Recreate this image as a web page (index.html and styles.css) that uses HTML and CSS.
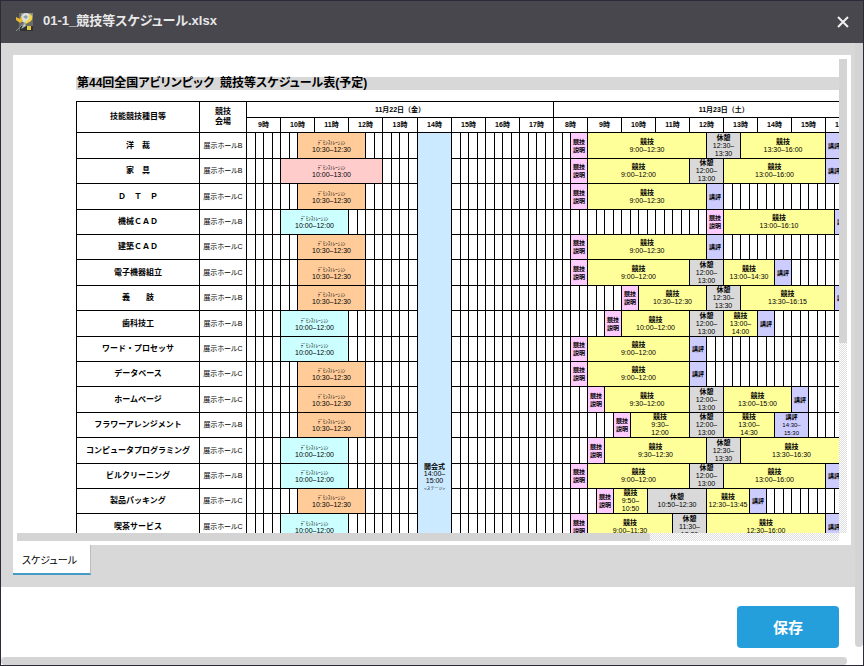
FILE: index.html
```
<!DOCTYPE html>
<html lang="ja">
<head>
<meta charset="utf-8">
<title>01-1_競技等スケジュール.xlsx</title>
<link rel="stylesheet" href="styles.css">
</head>
<body>
<div class="window">
  <header class="titlebar">
    <svg class="file-icon" viewBox="0 0 20 20" aria-hidden="true">
      <path d="M4 1h14v18H4z" fill="#6c6d62"/>
      <path d="M6 1h12v4H6z" fill="#8c8e86"/>
      <path d="M5 14h13v5H5z" fill="#2f3233"/>
      <circle cx="11" cy="6" r="5" fill="#d9e0df"/>
      <path d="M8 5l3-2 2 2-2 2z" fill="#8ba0a6"/>
      <path d="M1 5l4 2 1-3 2 5-3 2-4-3z" fill="#e6b82f"/>
      <path d="M14 2c5 1 4 7 0 8l-3 2-1-2 4-3z" fill="#f4d548"/>
      <path d="M9 11L1 19" stroke="#7f9294" stroke-width="1"/>
      <path d="M10 10l-4 7 5-3z" fill="#b9c2bc"/>
      <path d="M12 14h4v4h-4z" fill="#e5c93e"/>
    </svg>
    <h1 class="file-name">01-1_競技等スケジュール.xlsx</h1>
    <button class="close" type="button" aria-label="閉じる">
      <svg viewBox="0 0 12 12"><path d="M1 1l10 10M11 1l-10 10" stroke="#f0f0f0" stroke-width="2" fill="none"/></svg>
    </button>
  </header>
  <div class="content">
    <div class="page">
      <main class="viewer">
        <div class="sheet-frame">
          <div class="sheet-row">
            <div class="sheet">
              <h2 class="sheet-title">第44回全国アビリンピック&ensp;競技等スケジュール表(予定)</h2>
              <table class="schedule">
                <colgroup id="cols"><col class="col-name"><col class="col-place"></colgroup>
                <thead>
                  <tr class="days">
                    <th rowspan="2" class="event">技能競技種目等</th>
                    <th rowspan="2" class="place-head">競技<br>会場</th>
                    <th colspan="36">11月22日（金）</th>
                    <th colspan="40">11月23日（土）</th>
                  </tr>
                  <tr class="hours" id="hours"></tr>
                </thead>
                <tbody id="rows"></tbody>
              </table>
            </div>
            <div class="vbar"><div class="vthumb"></div></div>
          </div>
          <div class="hbar"><div class="hthumb"></div></div>
        </div>
        <nav class="tabs"><button class="tab" type="button">スケジュール</button></nav>
      </main>
      <footer class="actions"><button class="save" type="button">保存</button></footer>
    </div>
    <div class="page-vbar"></div>
  </div>
  <div class="page-hbar"></div>
</div>
<script src="schedule.js"></script>
</body>
</html>
```
FILE: schedule.js
```
// Slots are quarter hours: 0 is Friday 9:00, 36 is Saturday 8:00.
const SLOTS = 76;
const SAT = 36;
const demo = {
  a: [6, 14, "peach", "10:30–12:30"],
  b: [4, 12, "cyan", "10:00–12:00"],
  c: [4, 16, "rose", "10:00–13:00"]
};
const events = [
  ["洋　裁", "B", "a", [[2,4,"p"],[4,18,"k","9:00–12:30"],[18,22,"r","12:30–|13:30"],[22,32,"k","13:30–16:00"],[32,34,"e"]]],
  ["家　具", "B", "c", [[2,4,"p"],[4,16,"k","9:00–12:00"],[16,20,"r","12:00–|13:00"],[20,32,"k","13:00–16:00"],[32,34,"e"]]],
  ["Ｄ　Ｔ　Ｐ", "C", "a", [[2,4,"p"],[4,18,"k","9:00–12:30"],[18,20,"e"]]],
  ["機械ＣＡＤ", "B", "b", [[18,20,"p"],[20,33,"k","13:00–16:10"],[33,35,"e"]]],
  ["建築ＣＡＤ", "C", "a", [[2,4,"p"],[4,18,"k","9:00–12:30"],[18,20,"e"]]],
  ["電子機器組立", "C", "a", [[2,4,"p"],[4,16,"k","9:00–12:00"],[16,20,"r","12:00–|13:00"],[20,26,"k","13:00–14:30"],[26,28,"e"]]],
  ["義　　肢", "B", "a", [[8,10,"p"],[10,18,"k","10:30–12:30"],[18,22,"r","12:30–|13:30"],[22,33,"k","13:30–16:15"],[33,35,"e"]]],
  ["歯科技工", "B", "b", [[6,8,"p"],[8,16,"k","10:00–12:00"],[16,20,"r","12:00–|13:00"],[20,24,"k","13:00–|14:00"],[24,26,"e"]]],
  ["ワード・プロセッサ", "C", "b", [[2,4,"p"],[4,16,"k","9:00–12:00"],[16,18,"e"]]],
  ["データベース", "C", "a", [[2,4,"p"],[4,16,"k","9:00–12:00"],[16,18,"e"]]],
  ["ホームページ", "C", "a", [[4,6,"p"],[6,16,"k","9:30–12:00"],[16,20,"r","12:00–|13:00"],[20,28,"k","13:00–15:00"],[28,30,"e"]]],
  ["フラワーアレンジメント", "B", "a", [[7,9,"p"],[9,16,"k","9:30–|12:00"],[16,20,"r","12:00–|13:00"],[20,26,"k","13:00–|14:30"],[26,30,"e","14:30–|15:30"]]],
  ["コンピュータプログラミング", "C", "b", [[4,6,"p"],[6,18,"k","9:30–12:30"],[18,22,"r","12:30–|13:30"],[22,34,"k","13:30–16:30"],[34,36,"e"]]],
  ["ビルクリーニング", "B", "b", [[2,4,"p"],[4,16,"k","9:00–12:00"],[16,20,"r","12:00–|13:00"],[20,32,"k","13:00–16:00"],[32,34,"e"]]],
  ["製品パッキング", "C", "a", [[5,7,"p"],[7,11,"k","9:50–|10:50"],[11,18,"r","10:50–12:30"],[18,23,"k","12:30–13:45"],[23,25,"e"]]],
  ["喫茶サービス", "C", "b", [[2,4,"p"],[4,14,"k","9:00–11:30"],[14,18,"r","11:30–|12:30"],[18,32,"k","12:30–16:00"],[32,34,"e"]]]
];
const kinds = {
  p: ["prep", "競技<br>説明"],
  k: ["contest", "競技"],
  r: ["rest", "休憩"],
  e: ["end", "講評"]
};

const cols = document.getElementById("cols");
for (let i = 0; i < SLOTS; i++) {
  const col = document.createElement("col");
  col.className = i % 2 === 0 || i === 19 ? "wide" : "narrow";
  cols.append(col);
}

const hours = [9,10,11,12,13,14,15,16,17,8,9,10,11,12,13,14,15,16,17];
document.getElementById("hours").innerHTML =
  hours.map(h => `<th colspan="4">${h}時</th>`).join("");

const block = (from, to, cls, html) =>
  `<td colspan="${to - from}" class="${cls}">${html}</td>`;

document.getElementById("rows").innerHTML = events.map(([name, hall, d, sat], row) => {
  const [from, to, tone, time] = demo[d];
  const items = [[from, to, tone, `<small>ﾃﾞﾓﾝｽﾄﾚｰｼｮﾝ</small><br>${time}`], [20, 24, "opening", ""]];
  for (const [s, e, kind, t] of sat) {
    const [cls, label] = kinds[kind];
    const lines = t ? "<br>" + t.replace("|", "<br>") : "";
    items.push([SAT + s, SAT + e, cls, `<b>${label}</b>${lines}`]);
  }
  let html = "";
  let at = 0;
  for (const [s, e, cls, text] of items) {
    html += "<td></td>".repeat(s - at);
    if (cls !== "opening") html += block(s, e, cls, text);
    else if (row === 0) html += `<td colspan="4" rowspan="${events.length}" class="opening"><b>開会式</b><br>14:00–<br>15:00<br><small>&lt;ステージ&gt;</small></td>`;
    at = e;
  }
  html += "<td></td>".repeat(SLOTS - at);
  return `<tr><th class="event">${name}</th><td class="place">展示ホール${hall}</td>${html}</tr>`;
}).join("");
```
FILE: styles.css
```
* { box-sizing: border-box; }
body {
  margin: 0;
  font-family: "Liberation Sans", "Noto Sans CJK JP", sans-serif;
  color: #000;
}
button { font: inherit; border: 0; padding: 0; }
.window {
  display: flex;
  flex-direction: column;
  height: 100vh;
  border: 1px solid #2c2a38;
  background: #fff;
  overflow: hidden;
}
.titlebar {
  display: flex;
  align-items: center;
  flex: 0 0 42px;
  padding: 0 14px;
  background: #47474d;
  color: #e8e8e8;
}
.file-icon { width: 20px; height: 20px; }
.file-name {
  flex: 1;
  margin: 0 0 0 8px;
  font-size: 13px;
  line-height: 16px;
  padding-bottom: 3px;
  font-feature-settings: "palt";
}
.close {
  width: 12px;
  height: 12px;
  background: none;
}
.close svg { display: block; }
.content { display: flex; flex: 1; min-height: 0; }
.page { display: flex; flex-direction: column; flex: 1; min-width: 0; }
.viewer {
  display: flex;
  flex-direction: column;
  flex: 1;
  min-height: 0;
  padding: 12px 4px 12px 12px;
  background: #d8d8d8;
}
.sheet-frame {
  display: flex;
  flex-direction: column;
  flex: 1;
  min-height: 0;
  padding: 4px;
  background: #fff;
}
.sheet-row { display: flex; flex: 1; min-height: 0; }
.sheet { flex: 1; min-width: 0; padding: 18px 0 0 59px; overflow: hidden; }
.vbar, .hbar {
  background: repeating-conic-gradient(#ddd 0 25%, #fff 0 50%) 0 0 / 2px 2px;
}
.vbar { flex: 0 0 8px; }
.vthumb { height: 60%; background: #d4d4d4; }
.hbar { flex: 0 0 8px; margin-right: 8px; }
.hthumb { width: 77%; height: 100%; background: #d4d4d4; border-radius: 0 2px 2px 0; }
.sheet-title {
  margin: 0 0 11px;
  padding-left: 1px;
  font-size: 12px;
  line-height: 13px;
  white-space: nowrap;
  background: #d8d8d8;
  font-feature-settings: "palt";
}
.schedule {
  width: 817px;
  table-layout: fixed;
  border-collapse: collapse;
  font-size: 7px;
  line-height: 8px;
  text-align: center;
  white-space: nowrap;
}
.col-name { width: 123px; }
.col-place { width: 47px; }
.wide { width: 9px; }
.narrow { width: 8px; }
.schedule th, .schedule td { padding: 0; border: 1px solid #000; }
.schedule small { font-size: 5px; }
.days { height: 16px; }
.hours { height: 15px; }
.schedule .event { font-size: 8px; }
.schedule .place-head { font-size: 8px; line-height: 10px; }
.schedule tbody tr { height: 25px; }
.schedule tbody tr:nth-child(5n+1), .schedule tbody tr:nth-child(5n+3) { height: 26px; }
.schedule .place { font-feature-settings: "palt"; }
.schedule .prep, .schedule .end { font-size: 6px; }
.peach { background: #ffcc99; }
.cyan { background: #ccffff; }
.rose { background: #ffcccc; }
.prep { background: #ffccff; }
.contest { background: #ffff99; }
.rest { background: #d9d9d9; }
.end { background: #ccccff; }
.schedule .opening {
  padding-top: 330px;
  line-height: 7px;
  vertical-align: top;
  background: #cceaff;
}
.schedule .opening small { font-size: 4px; }
.tabs { display: flex; }
.tab {
  width: 78px;
  height: 30px;
  padding-right: 4px;
  background: #fff;
  border-right: 1px solid #bcbcbc;
  border-bottom: 2px solid #459bc5;
  font-size: 10px;
  font-feature-settings: "palt";
}
.actions {
  display: flex;
  justify-content: flex-end;
  padding: 19px 16px 9px;
  background: #fff;
}
.save {
  width: 102px;
  height: 42px;
  border-radius: 4px;
  background: #259fdc;
  color: #fff;
  font-size: 15px;
  padding-bottom: 2px;
  font-weight: bold;
}
.page-vbar {
  flex: 0 0 8px;
  margin-bottom: 10px;
  background: #d4d4d4;
  border-radius: 0 0 4px 4px;
}
.page-hbar {
  flex: 0 0 8px;
  margin-right: 16px;
  background: #d4d4d4;
  border-radius: 4px;
}
```
